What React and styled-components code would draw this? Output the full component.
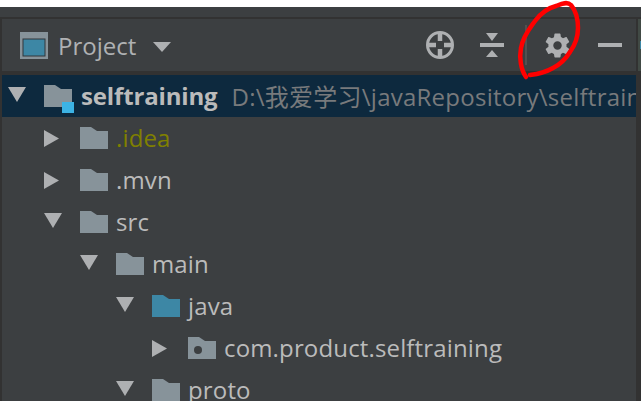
import styled, { createGlobalStyle } from 'styled-components';

const GlobalStyle = createGlobalStyle`
  html, body {
    margin: 0;
    padding: 0;
    background: #fff;
    overflow: hidden;
  }
`;

const Page = styled.div`
  position: relative;
  width: 641px;
  height: 401px;
  overflow: hidden;
  padding-top: 7px;
  box-sizing: border-box;
  background: #fff;
`;
const Panel = styled.div`
  height: 394px;
  background: #3c3f41;
  padding-top: 10px;
  box-sizing: border-box;
  font-family: "Open Sans", "Noto Sans CJK SC", sans-serif;
`;
const Inner = styled.div`
  display: flex;
  border-top: 2px solid #323232;
  border-left: 2px solid #323232;
  height: 100%;
  box-sizing: border-box;
`;
const Main = styled.div`
  flex: none;
  width: 634px;
`;
const SideStrip = styled.div`
  flex: 1;
  background: #323232;
  padding-left: 2px;
`;
const SideTab = styled.div`
  height: 52px;
  background: #414a45;
  display: flex;
  align-items: center;
  justify-content: flex-end;
`;
const SideMark = styled.div`
  width: 1px;
  height: 8px;
  background: #3d87a5;
`;
const Header = styled.div`
  height: 52px;
  display: flex;
  align-items: center;
  padding: 0 14px 0 18px;
  border-bottom: 4px solid #323232;
`;
const ProjectLabel = styled.span`
  font-size: 24px;
  color: #afb1b3;
  margin-left: 10px;
`;
const Caret = styled.svg`
  margin-left: 17px;
  margin-top: 3px;
`;
const Tools = styled.div`
  margin-left: auto;
  display: flex;
  align-items: center;
`;
const ToolButton = styled.div`
  width: ${(props) => props.$w}px;
  margin-left: ${(props) => props.$gap || 0}px;
  display: flex;
  justify-content: center;
  align-items: center;
`;
const Divider = styled.div`
  width: 2px;
  height: 40px;
  background: #515151;
  margin: 0 16px 0 21px;
`;
const Tree = styled.div`
  display: flex;
  flex-direction: column;
`;
const Row = styled.div`
  height: 42px;
  display: flex;
  align-items: center;
  white-space: nowrap;
  overflow: hidden;
  padding-left: ${(props) => 2 + props.$depth * 36}px;
  background: ${(props) => (props.$selected ? "#0d293e" : "transparent")};
`;
const Arrow = styled.svg`
  flex: none;
  width: 26px;
  height: 26px;
`;
const FolderIcon = styled.svg`
  flex: none;
  width: 30px;
  height: 28px;
  margin-left: 14px;
  margin-right: -2px;
  overflow: visible;
`;
const Name = styled.span`
  font-size: 24px;
  margin-left: ${(props) => (props.$bold ? 9 : 8)}px;
  margin-top: -2px;
  letter-spacing: ${(props) => (props.$bold ? -0.15 : 0.15)}px;
  color: ${(props) => props.$color || "#bbbbbb"};
  font-weight: ${(props) => (props.$bold ? 700 : 400)};
`;
const Path = styled.span`
  font-size: 24px;
  color: #787a7c;
  margin-left: 14px;
  margin-top: -2px;
  letter-spacing: 0.25px;
`;
const Scribble = styled.svg`
  position: absolute;
  left: 0;
  top: 0;
  pointer-events: none;
`;

const ArrowIcon = ({ open }) => (
  <Arrow viewBox="0 0 26 26">
    {open ? <path d="M4 4h18l-9 15z" fill="#aeb0b2" /> : <path d="M4 5l15 8.500L4 22z" fill="#aeb0b2" />}
  </Arrow>
);

const Folder = ({ color = "#87939a", dot, badge }) => (
  <FolderIcon viewBox="0 0 30 28">
    <path d="M0 3h11l6 4h11v18H0z" fill={color} />
    {dot && <circle cx="10" cy="16" r="4" fill="#3c3f41" />}
    {badge && <rect x="18" y="20" width="12" height="11" fill="#3cb3e4" />}
  </FolderIcon>
);

const rows = [
  { name: ".idea", depth: 1, color: "#808000" },
  { name: ".mvn", depth: 1 },
  { name: "src", depth: 1, open: true },
  { name: "main", depth: 2, open: true },
  { name: "java", depth: 3, open: true, folder: "#3d87a5" },
  { name: "com.product.selftraining", depth: 4, dot: true },
  { name: "proto", depth: 3, open: true },
];

const App = () => {
  return (
    <Page>
      <GlobalStyle />
      <Panel>
        <Inner>
          <Main>
            <Header>
              <svg width="28" height="27" viewBox="0 0 28 27">
                <rect width="28" height="27" fill="#87939a" />
                <rect x="3" y="7" width="22" height="17" fill="#3d87a5" stroke="#33373a" strokeWidth="1" />
              </svg>
              <ProjectLabel>Project</ProjectLabel>
              <Caret width="18" height="10" viewBox="0 0 18 10">
                <path d="M0 0h18l-9 10z" fill="#aeb0b2" />
              </Caret>
              <Tools>
                <ToolButton $w={28}>
                  <svg width="28" height="28" viewBox="0 0 28 28" fill="none" stroke="#aeb0b2">
                    <circle cx="14" cy="14" r="12.500" strokeWidth="3" />
                    <path d="M14 2v8M14 18v8M2 14h8M18 14h8" strokeWidth="4.500" />
                  </svg>
                </ToolButton>
                <ToolButton $w={24} $gap={26}>
                  <svg width="24" height="24" viewBox="0 0 24 24" fill="#aeb0b2">
                    <path d="M6 0h12l-6 8zM0 10h24v4H0zM12 17l6 7H6z" />
                  </svg>
                </ToolButton>
                <Divider />
                <ToolButton $w={29}>
                  <svg width="29" height="29" viewBox="0 0 24 24" fill="#aeb0b2">
                    <path fillRule="evenodd" d="M19.400 13c.04-.33.06-.66.06-1s-.02-.67-.06-1l2.100-1.650c.2-.15.24-.42.12-.64l-2-3.460c-.12-.22-.39-.3-.61-.22l-2.490 1c-.52-.4-1.080-.73-1.690-.98l-.38-2.650A.5.5 0 0 0 13.960 2h-4a.5.5 0 0 0-.49.42l-.38 2.650c-.61.25-1.170.59-1.690.98l-2.490-1c-.23-.09-.49 0-.61.22l-2 3.460c-.13.22-.07.49.12.64L4.520 11c-.04.33-.07.67-.07 1s.03.67.07 1l-2.110 1.650c-.19.15-.25.42-.12.64l2 3.460c.12.22.38.3.61.22l2.490-1c.52.4 1.080.73 1.690.98l.38 2.650c.05.24.25.42.49.42h4c.24 0 .45-.18.49-.42l.38-2.650c.61-.25 1.170-.59 1.690-.98l2.490 1c.22.09.49 0 .61-.22l2-3.460c.12-.22.08-.49-.12-.64L19.400 13zM12 15.500a3.500 3.500 0 1 1 0-7 3.500 3.500 0 0 1 0 7z" />
                  </svg>
                </ToolButton>
                <ToolButton $w={24} $gap={26}>
                  <svg width="24" height="4" viewBox="0 0 24 4">
                    <rect width="24" height="4" fill="#aeb0b2" />
                  </svg>
                </ToolButton>
              </Tools>
            </Header>
            <Tree>
              <Row $depth={0} $selected>
                <ArrowIcon open />
                <Folder badge />
                <Name $bold>selftraining</Name>
                <Path>D:\我爱学习\javaRepository\selftraining</Path>
              </Row>
              {rows.map((row) => (
                <Row key={row.name} $depth={row.depth}>
                  <ArrowIcon open={row.open} />
                  <Folder color={row.folder} dot={row.dot} />
                  <Name $color={row.color}>{row.name}</Name>
                </Row>
              ))}
            </Tree>
          </Main>
          <SideStrip>
            <SideTab>
              <SideMark />
            </SideTab>
          </SideStrip>
        </Inner>
      </Panel>
      <Scribble width="641" height="401" viewBox="0 0 641 401" fill="none">
        <path
          d="M526 77C521 70 519 58 521 48C523 36 530 28 535 21C541 13 548 8 556 6C561 4 567 1 571 5C576 11 578 20 578 28C578 38 575 45 570 52C565 60 559 65 553 68C546 72 538 74 530 75"
          stroke="#ff0000"
          strokeWidth="4.500"
          strokeLinecap="round"
        />
      </Scribble>
    </Page>
  )
}

export default App
